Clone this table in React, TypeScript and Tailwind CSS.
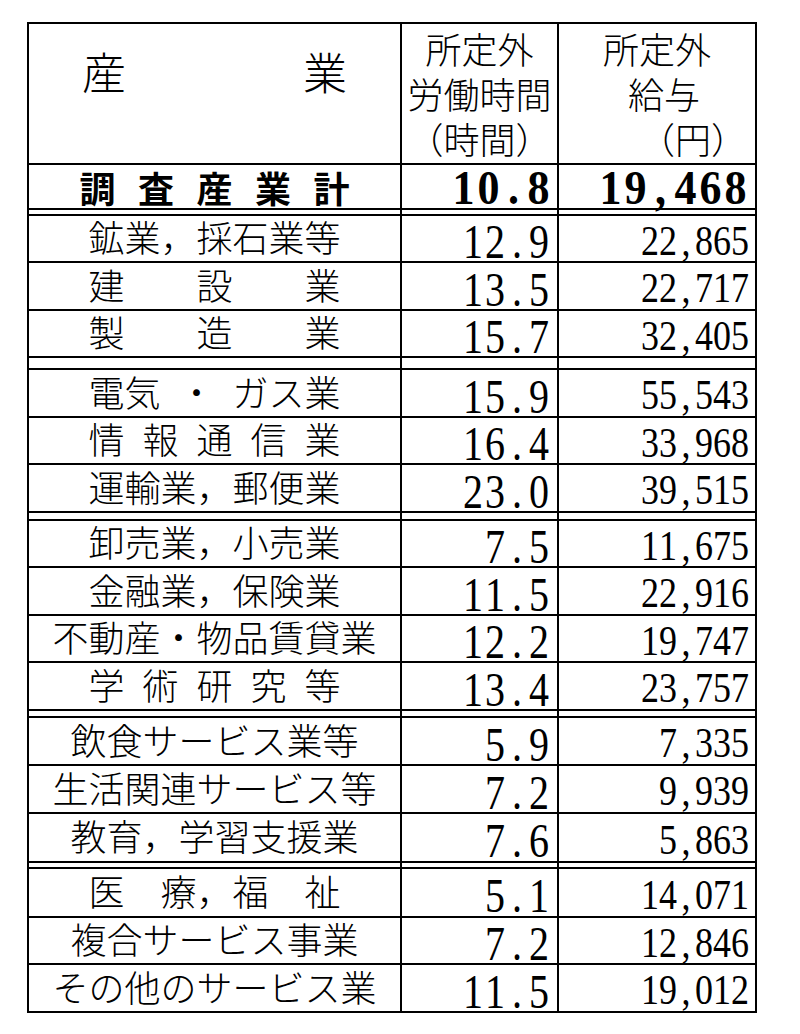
import React from 'react';

type Row = { label: string | string[]; h: string; y: string; hc: string };

const groups: { gap: string; rows: Row[] }[] = [
  {
    gap: 'h-[6px]',
    rows: [
      { label: '鉱業，採石業等', h: '12.9', y: '22,865', hc: 'h-[47px]' },
      { label: ['建', '設', '業'], h: '13.5', y: '22,717', hc: 'h-[48px]' },
      { label: ['製', '造', '業'], h: '15.7', y: '32,405', hc: 'h-[47px]' },
    ],
  },
  {
    gap: 'h-[12px]',
    rows: [
      { label: ['電気', '・', 'ガス業'], h: '15.9', y: '55,543', hc: 'h-[48px]' },
      { label: ['情', '報', '通', '信', '業'], h: '16.4', y: '33,968', hc: 'h-[47px]' },
      { label: '運輸業，郵便業', h: '23.0', y: '39,515', hc: 'h-[48px]' },
    ],
  },
  {
    gap: 'h-[8px]',
    rows: [
      { label: '卸売業，小売業', h: '7.5', y: '11,675', hc: 'h-[47px]' },
      { label: '金融業，保険業', h: '11.5', y: '22,916', hc: 'h-[48px]' },
      { label: '不動産・物品賃貸業', h: '12.2', y: '19,747', hc: 'h-[47px]' },
      { label: ['学', '術', '研', '究', '等'], h: '13.4', y: '23,757', hc: 'h-[48px]' },
    ],
  },
  {
    gap: 'h-[7px]',
    rows: [
      { label: '飲食サービス業等', h: '5.9', y: '7,335', hc: 'h-[48px]' },
      { label: '生活関連サービス等', h: '7.2', y: '9,939', hc: 'h-[48px]' },
      { label: '教育，学習支援業', h: '7.6', y: '5,863', hc: 'h-[49px]' },
    ],
  },
  {
    gap: 'h-[6px]',
    rows: [
      { label: ['医', '療，福', '祉'], h: '5.1', y: '14,071', hc: 'h-[49px]' },
      { label: '複合サービス事業', h: '7.2', y: '12,846', hc: 'h-[47px]' },
      { label: 'その他のサービス業', h: '11.5', y: '19,012', hc: 'h-[48px]' },
    ],
  },
];

// fixed-pitch digits, like the half-width Mincho figures of the sheet
const numCell = {
  h: 'w-[22px] text-[40px] scale-y-[1.2]',
  y: 'w-[18px] text-[36px] scale-y-[1.2]',
  b: 'w-[25px] text-[44px] font-bold scale-y-[1.08]',
};

function Num({ v, kind }: { v: string; kind: 'h' | 'y' | 'b' }) {
  return (
    <span className="flex h-[36px] font-['Liberation_Serif',serif] leading-none">
      {v.split('').map((c, i) => (
        <span key={i} className={`flex h-[36px] items-center justify-center ${numCell[kind]}`}>
          {c}
        </span>
      ))}
    </span>
  );
}

function Label({ label }: { label: string | string[] }) {
  if (Array.isArray(label)) {
    return (
      <div className="flex w-[252px] justify-between">
        {label.map((p, i) => (
          <span key={i}>{p}</span>
        ))}
      </div>
    );
  }
  return <span>{label}</span>;
}

const grid = 'grid grid-cols-[373px_157px_196px] border-b-2 border-black';

export default function App() {
  return (
    <div className="min-h-[1034px] w-[800px] bg-white pt-[22px] text-black font-['Noto_Sans_CJK_JP',sans-serif] font-light">
      <div className="ml-[27px] w-[730px] border-x-2 border-t-2 border-black">
        {/* Header */}
        <div className={`${grid} h-[141px]`}>
          <div className="border-r-2 border-black px-[53px] pt-[25px]">
            <div className="flex justify-between text-[44px] leading-none">
              <span>産</span>
              <span>業</span>
            </div>
          </div>
          <div className="flex flex-col items-center border-r-2 border-black pt-[2px] text-[36px] leading-[45px]">
            <span>所定外</span>
            <span>労働時間</span>
            <span>（時間）</span>
          </div>
          <div className="flex flex-col pt-[2px] text-[36px] leading-[45px]">
            <span className="text-center">所定外</span>
            <span className="pl-[14px] text-center">給与</span>
            <span className="pr-[8px] text-right">（円）</span>
          </div>
        </div>

        {/* Total */}
        <div className={`${grid} h-[45px]`}>
          <div className="flex items-center justify-center border-r-2 border-black text-[36px] font-bold leading-none">
            <div className="flex w-[270px] justify-between">
              {['調', '査', '産', '業', '計'].map((c, i) => (
                <span key={i}>{c}</span>
              ))}
            </div>
          </div>
          <div className="flex items-center justify-end border-r-2 border-black pr-[6px] pt-[5px]">
            <Num v="10.8" kind="b" />
          </div>
          <div className="flex items-center justify-end pr-[7px] pt-[5px]">
            <Num v="19,468" kind="b" />
          </div>
        </div>

        {groups.map((g, gi) => (
          <div key={gi}>
            <div className={`${grid} ${g.gap}`}>
              <div className="border-r-2 border-black" />
              <div className="border-r-2 border-black" />
              <div />
            </div>
            {g.rows.map((r, ri) => (
              <div key={ri} className={`${grid} ${r.hc}`}>
                <div className="flex items-center justify-center border-r-2 border-black pb-[5px] text-[36px] leading-none">
                  <Label label={r.label} />
                </div>
                <div className="flex items-center justify-end border-r-2 border-black pr-[7px] pt-[7px] font-normal">
                  <Num v={r.h} kind="h" />
                </div>
                <div className="flex items-center justify-end pr-[6px] pt-[4px] font-normal">
                  <Num v={r.y} kind="y" />
                </div>
              </div>
            ))}
          </div>
        ))}
      </div>
    </div>
  );
}
